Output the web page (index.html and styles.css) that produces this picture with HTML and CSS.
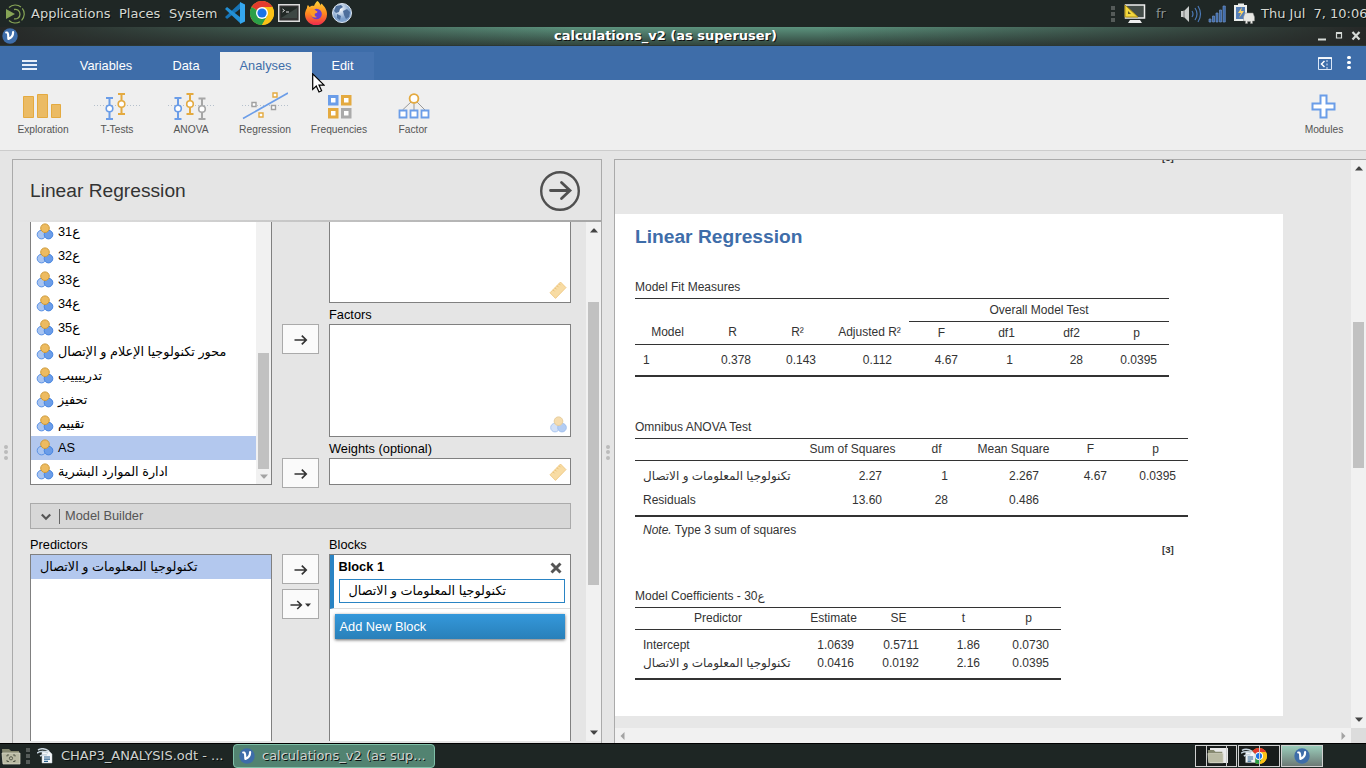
FILE: index.html
```html
<!DOCTYPE html>
<html lang="en">
<head>
<meta charset="utf-8">
<title>calculations_v2 (as superuser)</title>
<link rel="stylesheet" href="styles.css">
</head>
<body>
<svg class="defs" aria-hidden="true">
  <defs>
    <linearGradient id="fox" x1="0" y1="0" x2="0" y2="1"><stop offset="0" stop-color="#ffd43a"/><stop offset=".5" stop-color="#ff8a1e"/><stop offset="1" stop-color="#f0284f"/></linearGradient>
    <radialGradient id="globe" cx=".4" cy=".3"><stop offset="0" stop-color="#fff"/><stop offset="1" stop-color="#7fa2cd"/></radialGradient>
    <symbol id="nominal" viewBox="0 0 17 17">
      <circle cx="5" cy="11.6" r="4.3" fill="#a9c5f1" stroke="#5b92e5"/>
      <circle cx="12" cy="11.6" r="4.3" fill="#6b9de8" stroke="#4684e0"/>
      <circle cx="8.5" cy="5.2" r="4.3" fill="#edbb60" stroke="#cf9a38"/>
    </symbol>
    <symbol id="ruler" viewBox="0 0 18 18">
      <path d="M11.5 1 17 6.6 6.5 17.4 1 11.8z" fill="#f8dca4" stroke="#edc47a" stroke-width=".8"/>
      <path d="M4 8.8l1.5 1.5M6 6.8l1.5 1.5M8 4.7l1.5 1.5M10 2.7l1.5 1.5" stroke="#e4b96c" stroke-width=".8"/>
    </symbol>
    <symbol id="arrow" viewBox="0 0 14 12"><path d="M0.5 6H12M7.8 1.7 12.2 6 7.8 10.3" fill="none" stroke="#333" stroke-width="1.7"/></symbol>
    <symbol id="jamovi" viewBox="0 0 16 16"><circle cx="8" cy="8" r="7.7" fill="#3e6da9"/><path d="M4.200 4.500h.9c1.300 0 1 2.600 1.300 6.500 2.800-1 4.700-3 4.700-6.800" fill="none" stroke="#fff" stroke-width="2.2" stroke-linecap="round" stroke-linejoin="round"/></symbol>
    <symbol id="chrome" viewBox="0 0 24 24"><circle cx="12" cy="12" r="12" fill="#fbc116"/><path d="M12 12 1.6 6A12 12 0 0 1 22.4 6z" fill="#e33b2e"/><path d="M1.6 6A12 12 0 0 0 12 24L17.2 15 12 12z" fill="#2b9f48"/><path d="M12 6h10.4A12 12 0 0 1 12 24l5.2-9z" fill="#fbc116"/><circle cx="12" cy="12" r="6" fill="#fff"/><circle cx="12" cy="12" r="4.6" fill="#1a73e8"/></symbol>
    <symbol id="writer" viewBox="0 0 16 16"><path d="M5 3h7l3 3v9H5z" fill="#f5f7f9" stroke="#b8c4ca" stroke-width=".5"/><path d="M1 2q5-3 11 1M0 5q5-3 11 0M3 8q4-2 7-1" stroke="#c8d5de" fill="none" stroke-width="1.5"/><path d="M7 9h6M7 11.2h6M7 13.4h4" stroke="#2a618e" stroke-width="1.2"/></symbol>
    <symbol id="folder" viewBox="0 0 20 18"><path d="M1 2h7l2 2h8v12H2z" fill="#85886f"/><path d="M1 6h18v11H2z" fill="#b9baa3" stroke="#dddccb" stroke-width=".7"/></symbol>
    <symbol id="up" viewBox="0 0 8 5"><path d="M0 4.5 3.5.5h1L8 4.5z" fill="currentColor"/></symbol>
    <symbol id="down" viewBox="0 0 8 5"><path d="M0 .5 3.5 4.5h1L8 .5z" fill="currentColor"/></symbol>
  </defs>
</svg>

<div class="desktop">
  <header class="panel">
    <svg class="mate" viewBox="0 0 20 20" width="20" height="20"><g fill="none" stroke="#87a556"><path d="M4 3.5A9 9 0 1 1 4 16.500" stroke-dasharray="13 2" stroke-width="1.2"/><path d="M9 5.500a4.800 4.800 0 1 1 0 9.300" stroke-width="1.300"/></g><path d="M1 5l9 5-9 5z" fill="#87a556"/></svg>
    <span class="menu m1">Applications</span><span class="menu m2">Places</span><span class="menu m3">System</span>
    <div class="launchers">
      <svg viewBox="0 0 22 22" width="22" height="22"><path d="M16 1v6L3 17 1 15z" fill="#1673b5"/><path d="M16 21v-6L3 5 1 7z" fill="#2390d6"/><path d="M16 0l5 2.500v17L16 22z" fill="#35a7ef"/></svg>
      <svg width="24" height="24"><use href="#chrome"/></svg>
      <svg viewBox="0 0 22 18" width="22" height="18"><path d="M.7.7h20.600v16.600H.7z" fill="#333" stroke="#ddd" stroke-width="1.400"/><path d="M3 3h16v11H3z" fill="#222926"/><path d="M3 14 19 4v10z" fill="#3d4744"/><path d="M4.500 5l2 1.500-2 1.500M8 8h3" stroke="#e4e4e4" fill="none"/></svg>
      <svg viewBox="0 0 24 24" width="24" height="24"><path d="M13.500 0c1.800 1.500 2.500 3 3.300 4.400 0-.8.300-1.400.7-1.900 2.700 2.700 5.500 6 5.500 10.500A11 11 0 1 1 3 7c0-1.500.4-2.300 1-3l1.500 2C7.500 4.500 9 4.700 10 5c1-2.500 2-4 3.500-5z" fill="url(#fox)"/><circle cx="12.500" cy="13" r="5.300" fill="#6b3fd0"/><path d="M6 8c3-1 5 0 6 2 2 0 2 2-1 2.500-1 2 0 3 2 3.500-4 2-8-2-7-8z" fill="#ff9b24"/></svg>
      <svg viewBox="0 0 20 20" width="20" height="20"><circle cx="10" cy="10" r="9.500" fill="url(#globe)" stroke="#dde7f3"/><path d="M4 3l5-1 2 2-3 2-1 3-3 1-2-2zM11 8l4-2 3 3-1 5-3 2-2-4zM5 11l4 2-1 4-3-2z" fill="#4e6f9c"/></svg>
    </div>
    <div class="tray">
      <i class="grip"><b></b><b></b><b></b></i>
      <svg class="t1" viewBox="0 0 22 20" width="22" height="20"><path d="M1.500 1h19v13h-19z" fill="#444d49" stroke="#eee" stroke-width="1.500"/><path d="M6 16h10l2 3H4z" fill="#eee"/><path d="M1 1l13 12H1z" fill="#f4d83d" stroke="#ad8d12"/><path d="M4 7l3 3H4z" fill="#615923"/></svg>
      <span class="lang">fr</span>
      <svg class="t2" viewBox="0 0 22 20" width="22" height="20"><path d="M1 7h3l5-5v16l-5-5H1z" fill="#c9cccb"/><path d="M4 6v8" stroke="#777"/><path d="M12 7q2 3 0 6M15 4q4 6 0 12M18 2q5 8 0 16" stroke="#4b79b6" fill="none" stroke-width="1.200"/></svg>
      <svg class="t3" viewBox="0 0 18 18" width="18" height="18"><path d="M1 14h2v3H1zM4.500 11h2v6h-2zM8 8h2v9H8zM11.500 5h2v12h-2zM15 1h2.300v16H15z" fill="#3b67a8" stroke="#6f94c9" stroke-width=".7"/></svg>
      <svg class="t4" viewBox="0 0 22 21" width="22" height="21"><path d="M1 2h4V.5h6V2h3v16H1z" fill="#ecefec"/><path d="M3 4h9v12H3z" fill="#557fb8"/><path d="M9 4 5 10h3l-2 5 5-7H8z" fill="#ffd45e"/><path d="M12 10h8l1.500 4v4h-2v2.500h-2V18.500h-3v2h-2V18h-2v-4z" fill="#e8e8e4" stroke="#888" stroke-width=".5"/></svg>
      <span class="clock">Thu Jul&nbsp; 7, 10:06</span>
    </div>
  </header>

  <div class="titlebar">
    <svg class="app" width="16" height="16"><use href="#jamovi"/></svg>
    <span class="title">calculations_v2 (as superuser)</span>
    <svg class="winbtns" viewBox="0 0 44 12" width="44" height="12"><path d="M1 9.500h8" stroke="#d6dad7" stroke-width="2"/><path d="M19.500 3h5v5h-5z" fill="none" stroke="#d6dad7" stroke-width="1.200"/><path d="M19 3h6" stroke="#d6dad7" stroke-width="2"/><path d="M35.500 2l7 7.500M42.500 2l-7 7.500" stroke="#d6dad7" stroke-width="2.200"/></svg>
  </div>

  <nav class="tabs">
    <div class="burger"><i></i><i></i><i></i></div>
    <div class="tab variables">Variables</div><div class="tab data">Data</div><div class="tab analyses">Analyses</div><div class="tab edit">Edit</div>
    <svg class="hide" viewBox="0 0 14 13" width="14" height="13"><path d="M.5.5h13v12H.5z" fill="none" stroke="#d9e6f7"/><path d="M0 1.200h14" stroke="#fff" stroke-width="1.500"/><path d="M6.500 4 3.500 7l3 3" stroke="#fff" fill="none" stroke-width="1.500"/><path d="M9 3v9" stroke="#d9e6f7" stroke-dasharray="2 1.500"/></svg>
    <div class="kebab"><i></i><i></i><i></i></div>
  </nav>

  <div class="ribbon">
    <div class="tool"><svg viewBox="0 0 46 32" width="46" height="32"><g fill="#ebbb64" stroke="#e4aa40"><path d="M3.500 6.500h10v21h-10zM17.500 4.500h10v23h-10zM31.500 14.500h9v13h-9z"/></g></svg><span>Exploration</span></div>
    <div class="tool"><svg viewBox="0 0 46 32" width="46" height="32"><path d="M0 15.500h46" stroke="#b5c0cc" stroke-dasharray="1 2"/><g fill="none" stroke-width="2"><path d="M12 8h7M12 29h7M15.500 8v21" stroke="#6b9de8"/><path d="M24 4h7M24 24h7M27.500 4v20" stroke="#e4aa40"/></g><circle cx="15.500" cy="18.500" r="3.300" fill="#fff" stroke="#6b9de8" stroke-width="1.600"/><circle cx="27.500" cy="14" r="3.300" fill="#fff" stroke="#e4aa40" stroke-width="1.600"/></svg><span>T-Tests</span></div>
    <div class="tool"><svg viewBox="0 0 46 32" width="46" height="32"><path d="M0 15.500h46" stroke="#b5c0cc" stroke-dasharray="1 2"/><g fill="none" stroke-width="2"><path d="M6.500 8h7M6.500 29h7M10 8v21" stroke="#6b9de8"/><path d="M18.500 4h7M18.500 24h7M22 4v20" stroke="#e4aa40"/><path d="M30.500 8.500h7M30.500 29h7M34 8v21" stroke="#a6a6a6"/></g><circle cx="10" cy="18.500" r="3.300" fill="#fff" stroke="#6b9de8" stroke-width="1.600"/><circle cx="22" cy="14" r="3.300" fill="#fff" stroke="#e4aa40" stroke-width="1.600"/><circle cx="34" cy="19" r="3.300" fill="#fff" stroke="#a6a6a6" stroke-width="1.600"/></svg><span>ANOVA</span></div>
    <div class="tool"><svg viewBox="0 0 46 32" width="46" height="32"><path d="M0 15.500h46" stroke="#b5c0cc" stroke-dasharray="1 2"/><path d="M1 28.500 46 3" stroke="#6b9de8" stroke-width="1.600"/><g fill="#fff" stroke-width="1.400"><path d="M31 3h4v4h-4zM17 23h4v4h-4z" stroke="#e4aa40"/><path d="M10 12.500h4v4h-4zM29.500 15.500h4v4h-4z" stroke="#a0a0a0"/></g></svg><span>Regression</span></div>
    <div class="tool"><svg class="nudge" viewBox="0 0 46 32" width="46" height="32"><g fill="#fff" stroke-width="3"><path d="M12.500 6.500h7.500v7.500h-7.500z" stroke="#6b9de8"/><path d="M25.500 6.500H33v7.500h-7.500zM12.500 19.500h7.500V27h-7.500z" stroke="#e4aa40"/><path d="M25.500 19.500H33V27h-7.500z" stroke="#aaa"/></g></svg><span>Frequencies</span></div>
    <div class="tool"><svg class="nudge" viewBox="0 0 46 32" width="46" height="32"><path d="M20 12 11.500 20M23 13v7M26 12l8 8" stroke="#999" fill="none"/><circle cx="23" cy="8.500" r="4.400" fill="#fff" stroke="#e4aa40" stroke-width="1.800"/><path d="M8.500 20.500h7v7h-7zM19.500 20.500h7v7h-7zM30.500 20.500h7v7h-7z" fill="#fff" stroke="#6b9de8" stroke-width="1.800"/></svg><span>Factor</span></div>
    <div class="tool modules"><svg viewBox="0 0 46 32" width="46" height="32"><path d="M19.500 5.500h6v8h8v6h-8v8h-6v-8h-8v-6h8z" fill="#fff" stroke="#6b9de8" stroke-width="2"/></svg><span>Modules</span></div>
  </div>

  <main class="work">
    <div class="gutter"><b></b><b></b><b></b></div>
    <section class="options">
      <div class="ophead"><h2>Linear Regression</h2>
        <svg viewBox="0 0 40 40" width="40" height="40"><circle cx="20" cy="20" r="18.800" fill="none" stroke="#505050" stroke-width="2.400"/><path d="M10.500 19.500H29M21.500 11.500l8.500 8-8.500 8" fill="none" stroke="#505050" stroke-width="2.800" stroke-linecap="round" stroke-linejoin="miter"/></svg>
      </div>
      <div class="opbody">
        <div class="opcontent">
          <div class="upper">
            <div class="varlist">
              <div class="vars">
                <div class="var"><svg><use href="#nominal"/></svg>ع31</div>
                <div class="var"><svg><use href="#nominal"/></svg>ع32</div>
                <div class="var"><svg><use href="#nominal"/></svg>ع33</div>
                <div class="var"><svg><use href="#nominal"/></svg>ع34</div>
                <div class="var"><svg><use href="#nominal"/></svg>ع35</div>
                <div class="var"><svg><use href="#nominal"/></svg>محور تكنولوجيا الإعلام و الإتصال</div>
                <div class="var"><svg><use href="#nominal"/></svg>تدرييييب</div>
                <div class="var"><svg><use href="#nominal"/></svg>تحفيز</div>
                <div class="var"><svg><use href="#nominal"/></svg>تقييم</div>
                <div class="var sel"><svg><use href="#nominal"/></svg>AS</div>
                <div class="var"><svg><use href="#nominal"/></svg>ادارة الموارد البشرية</div>
              </div>
              <div class="vscroll inner"><div class="thumb"></div><svg class="tri"><use href="#down"/></svg></div>
            </div>
            <div class="btncol">
              <div class="btn b1"><svg width="14" height="12"><use href="#arrow"/></svg></div>
              <div class="btn b2"><svg width="14" height="12"><use href="#arrow"/></svg></div>
            </div>
            <div class="targets">
              <div class="box cov"><svg width="18" height="18"><use href="#ruler"/></svg></div>
              <div class="label">Factors</div>
              <div class="box fac"><svg class="faint" width="17" height="17"><use href="#nominal"/></svg></div>
              <div class="label">Weights (optional)</div>
              <div class="box wts"><svg width="18" height="18"><use href="#ruler"/></svg></div>
            </div>
          </div>
          <div class="collapse"><svg viewBox="0 0 10 8" width="10" height="8"><path d="M.8 1.500 5 5.800 9.200 1.500" fill="none" stroke="#555" stroke-width="2.200"/></svg><i></i><span>Model Builder</span></div>
          <div class="lower">
            <div class="col"><div class="label">Predictors</div><div class="supplier"><div class="pred">تكنولوجيا المعلومات و الاتصال</div></div></div>
            <div class="btncol low">
              <div class="btn"><svg width="14" height="12"><use href="#arrow"/></svg></div>
              <div class="btn drop"><svg width="13" height="12"><use href="#arrow"/></svg><svg class="caret" width="6" height="4"><use href="#down"/></svg></div>
            </div>
            <div class="col"><div class="label">Blocks</div>
              <div class="blocks">
                <div class="block"><div class="bhead"><span>Block 1</span><svg viewBox="0 0 12 12" width="12" height="12"><path d="M1.500 1.500l9 9M10.500 1.500l-9 9" stroke="#555" stroke-width="2.900"/></svg></div><div class="term">تكنولوجيا المعلومات و الاتصال</div></div>
                <div class="add">Add New Block</div>
              </div>
            </div>
          </div>
        </div>
        <div class="vscroll outer"><svg class="tri"><use href="#up"/></svg><div class="thumb"></div><svg class="tri"><use href="#down"/></svg></div>
      </div>
    </section>
    <div class="gutter mid"><b></b><b></b><b></b></div>
    <section class="results">
      <div class="view">
        <div class="prev"><span class="ref">[3]</span></div>
        <article class="page">
          <h1>Linear Regression</h1>
          <div class="cap">Model Fit Measures</div>
          <table class="fit">
            <colgroup><col class="c65"><col class="c65"><col class="c65"><col class="c79"><col class="c65"><col class="c65"><col class="c65"><col class="c65"></colgroup>
            <thead><tr class="over"><th colspan="4"></th><th colspan="4" class="span">Overall Model Test</th></tr>
            <tr class="names"><th>Model</th><th>R</th><th>R²</th><th>Adjusted R²</th><th class="sub">F</th><th class="sub">df1</th><th class="sub">df2</th><th class="sub">p</th></tr></thead>
            <tbody><tr><td class="txt">1</td><td class="p14">0.378</td><td class="p14">0.143</td><td class="p17">0.112</td><td class="p16">4.67</td><td class="p26">1</td><td class="p21">28</td><td class="p12">0.0395</td></tr></tbody>
          </table>
          <div class="cap c2">Omnibus ANOVA Test</div>
          <table class="anova">
            <colgroup><col class="c166"><col class="c103"><col class="c65"><col class="c89"><col class="c65"><col class="c65"></colgroup>
            <thead><tr><th></th><th>Sum of Squares</th><th>df</th><th>Mean Square</th><th>F</th><th>p</th></tr></thead>
            <tbody><tr><td class="txt">تكنولوجيا المعلومات و الاتصال</td><td class="p22">2.27</td><td class="p21">1</td><td class="p19">2.267</td><td class="p16">4.67</td><td class="p12">0.0395</td></tr>
            <tr><td class="txt">Residuals</td><td class="p22">13.60</td><td class="p21">28</td><td class="p19">0.486</td><td></td><td></td></tr></tbody>
          </table>
          <div class="note"><em>Note.</em> Type 3 sum of squares</div>
          <div class="refline"><span class="ref">[3]</span></div>
          <div class="cap c3">Model Coefficients - ع30</div>
          <table class="coef">
            <colgroup><col class="c166"><col class="c65"><col class="c65"><col class="c65"><col class="c65"></colgroup>
            <thead><tr><th>Predictor</th><th>Estimate</th><th>SE</th><th>t</th><th>p</th></tr></thead>
            <tbody><tr><td class="txt">Intercept</td><td class="p12">1.0639</td><td class="p12">0.5711</td><td class="p16">1.86</td><td class="p12">0.0730</td></tr>
            <tr><td class="txt">تكنولوجيا المعلومات و الاتصال</td><td class="p12">0.0416</td><td class="p12">0.0192</td><td class="p16">2.16</td><td class="p12">0.0395</td></tr></tbody>
          </table>
        </article>
      </div>
      <div class="vscroll right"><svg class="tri"><use href="#up"/></svg><div class="thumb"></div><svg class="tri"><use href="#down"/></svg></div>
      <div class="hscroll"><svg viewBox="0 0 5 8" width="5" height="8"><path d="M4.500 0v8L.5 4z" fill="#a3a3a3"/></svg><svg viewBox="0 0 5 8" width="5" height="8"><path d="M.5 0v8l4-4z" fill="#a3a3a3"/></svg></div>
      <div class="corner"></div>
    </section>
  </main>

  <footer class="taskbar">
    <svg class="home" viewBox="0 0 20 18" width="20" height="18"><use href="#folder"/><path d="M6 9.500V8h2M12 8h2v1.500M14 13v1.500h-2M8 14.500H6V13" stroke="#555a4b" fill="none"/><circle cx="10" cy="11.300" r="1.600" fill="none" stroke="#555a4b"/></svg>
    <i class="grip"><b></b><b></b><b></b></i>
    <div class="task"><svg width="16" height="16"><use href="#writer"/></svg><span>CHAP3_ANALYSIS.odt - ...</span></div>
    <div class="task active"><svg width="16" height="16"><use href="#jamovi"/></svg><span>calculations_v2 (as sup...</span></div>
    <div class="pager">
      <div class="ws"><svg viewBox="0 0 40 20" width="40" height="20"><path d="M14 2h18v15H14z" fill="#e9eaea"/><use href="#folder" x="11" y="2" width="17" height="16"/><path d="M10.500 0v20M30.500 0v20" stroke="#ccc"/></svg></div>
      <div class="ws"><svg viewBox="0 0 40 20" width="40" height="20"><use href="#chrome" x="12" y="2" width="16" height="16"/><use href="#writer" x="2" y="2" width="15" height="16"/><path d="M20.500 0v20" stroke="#ccc"/></svg></div>
      <div class="ws on"><svg width="16" height="16"><use href="#jamovi"/></svg></div>
    </div>
  </footer>
  <svg class="pointer" viewBox="0 0 13 20" width="13" height="20"><path d="M.7.9v15.500l3.600-3.400 2.700 6 2.600-1.200-2.600-5.700h5z" fill="#fff" stroke="#000" stroke-width="1.200"/></svg>
</div>
</body>
</html>
```
FILE: styles.css
```css
* { box-sizing: border-box; }
body { margin: 0; font-family: "Liberation Sans", "DejaVu Sans", sans-serif; font-size: 12.8px; color: #000; }
svg { display: block; flex: none; }
.defs { position: absolute; width: 0; height: 0; }
.desktop { position: relative; width: 1366px; height: 768px; overflow: hidden; display: flex; flex-direction: column; background: #e5e5e5; }

/* desktop panel */
.panel { height: 27px; flex: none; display: flex; align-items: center; background: #1f2725; color: #d5d8d3; font: 13px/26px "DejaVu Sans", sans-serif; white-space: nowrap; text-shadow: 1px 1px 0 #0b0f0e; }
.mate { margin-left: 5px; }
.m1 { margin-left: 6px; width: 88px; }
.m2 { width: 50px; }
.m3 { width: 55px; }
.launchers { display: flex; align-items: center; gap: 4px; padding-bottom: 2px; }
.tray { margin-left: auto; display: flex; align-items: center; }
.grip { display: flex; flex-direction: column; gap: 2px; }
.grip b { width: 4px; height: 4px; background: #555b59; }
.t1 { margin-left: 9px; }
.lang { margin-left: 10px; color: #8b9290; width: 11px; }
.t2 { margin-left: 13px; }
.t3 { margin-left: 6px; }
.t4 { margin-left: 7px; }
.clock { margin-left: 6px; width: 105px; }

.titlebar { height: 19px; flex: none; display: flex; align-items: center; background: linear-gradient(90deg, #262827 0, #26282700 42%, #26282700 60%, #262827 100%), linear-gradient(#5c937e, #32463e); color: #fff; border-bottom: 1px solid #2b3733; }
.app { margin-left: 2px; }
.title { flex: 1; text-align: center; font: bold 13px/18px "DejaVu Sans", sans-serif; padding-right: 4px; text-shadow: 1px 1px 0 #111; }
.winbtns { margin-right: 5px; }

.tabs { height: 34px; flex: none; display: flex; align-items: flex-end; background: #3e6da9; color: #fff; }
.burger { width: 15px; margin: 0 0 10px 22px; display: flex; flex-direction: column; gap: 2px; }
.burger i { height: 2px; background: #e8effa; }
.tab { height: 28px; line-height: 28px; text-align: center; }
.variables { margin-left: 23px; width: 92px; }
.data { width: 68px; }
.analyses { width: 92px; background: #efefef; color: #3e6da9; padding-right: 1px; }
.edit { width: 62px; background: #4673af; padding-right: 1px; }
.hide { margin: 0 0 10px auto; }
.kebab { margin: 0 15px 11px 15px; display: flex; flex-direction: column; gap: 1.500px; }
.kebab i { width: 4px; height: 3.500px; border-radius: 2px; background: #fff; }

.ribbon { height: 71px; flex: none; display: flex; background: #efefef; border-bottom: 1px solid #ccc; padding: 10px 5px 0 6px; }
.tool { width: 74px; display: flex; flex-direction: column; align-items: center; font-size: 10.240px; line-height: 16px; color: #555; }
.nudge { margin: 0 -1px 0 0; }
.modules { margin-left: auto; }

.work { height: 592px; flex: none; display: flex; padding-top: 8px; }
.gutter { width: 12px; flex: none; display: flex; flex-direction: column; align-items: center; justify-content: center; gap: 1.500px; padding-top: 2px; }
.gutter b { width: 4px; height: 4px; border-radius: 2px; background: #bbb; }

.options { width: 590px; flex: none; border: 1px solid #aaa; border-bottom: 0; display: flex; flex-direction: column; }
.ophead { height: 60px; flex: none; display: flex; align-items: center; justify-content: space-between; padding: 1px 21px 0 17px; }
.ophead h2 { margin: 0; font-weight: 400; font-size: 19.200px; color: #333; }
.opbody { height: 521px; overflow: hidden; display: flex; border-top: 2px solid; border-image: linear-gradient(90deg, #e5e5e5, #a5a5a5) 1; }
.opcontent { width: 573px; padding-left: 17px; height: 519px; overflow: hidden; }
.upper { display: flex; height: 263px; }
.varlist { width: 242px; height: 263px; border: 1px solid #808080; border-top: 0; background: #fff; display: flex; overflow: hidden; }
.vars { width: 225px; margin-top: -2px; }
.var { height: 24px; line-height: 24px; display: flex; align-items: center; gap: 4px; padding-left: 5px; white-space: nowrap; }
.var svg { width: 18px; height: 17px; margin-bottom: 1px; }
.sel, .pred { background: #b3c8ee; }
.vscroll { width: 15px; flex: none; background: #f1f1f1; display: flex; flex-direction: column; align-items: center; color: #444; }
.vscroll .thumb { width: 11px; background: #c1c1c1; }
.tri { width: 8px; height: 5px; }
.inner .thumb { height: 116px; margin: 131px 0 5px; }
.inner .tri { color: #a3a3a3; }
.btncol { width: 57px; flex: none; padding: 0 10px; }
.btn { width: 37px; height: 30px; border: 1px solid #aaa; background: #fafafa; display: flex; align-items: center; justify-content: center; padding-top: 1px; }
.b1 { margin-top: 102px; }
.b2 { margin-top: 104px; }
.targets { width: 242px; }
.box { border: 1px solid #808080; background: #fff; display: flex; align-items: flex-end; justify-content: flex-end; padding: 3px; }
.box .faint { opacity: .5; }
.cov { height: 81px; border-top: 0; }
.fac { height: 113px; }
.wts { height: 27px; }
.targets .label { height: 21px; line-height: 24px; }
.collapse { width: 541px; height: 26px; margin-top: 18px; border: 1px solid #aaa; background: #d7d7d7; color: #555; display: flex; align-items: center; padding-left: 10px; }
.collapse span { margin-top: -1px; }
.collapse svg { margin-top: 2px; }
.collapse i { width: 1px; height: 15px; background: #666; margin: 0 5px 0 8px; }
.lower { display: flex; padding-top: 7px; }
.col { width: 242px; }
.lower .label { height: 18px; line-height: 18px; }
.supplier, .blocks { height: 200px; border: 1px solid #808080; background: #fff; }
.pred { height: 24px; line-height: 24px; padding-left: 9px; }
.low { padding-top: 18px; }
.drop { margin-top: 5px; gap: 2px; }
.caret { color: #333; }
.block { height: 54px; border-left: 4px solid #2a84c4; border-bottom: 1px solid #ddd; padding: 0 5px 0 4.500px; }
.bhead { height: 24px; line-height: 24px; display: flex; align-items: center; justify-content: space-between; font-weight: 700; padding-right: 3px; }
.bhead svg { margin-top: 2px; }
.term { height: 24px; line-height: 22px; border: 1px solid #2a84c4; padding-left: 9px; }
.add { height: 25px; line-height: 25px; margin: 5px; background: linear-gradient(#3498db, #2980b9); color: #fff; padding-left: 4.500px; box-shadow: 0 1px 3px #0009; }
.outer .tri:first-child { margin-top: 6px; }
.outer .thumb { height: 283px; margin: 69px 0 145px; }

.results { flex: 1; border-top: 1px solid #aaa; border-left: 1px solid #aaa; display: grid; grid-template: 568px 15px / 1fr 15px; background: #e7e7e7; color: #333; font-size: 12px; }
.view { overflow: hidden; }
.prev { height: 54px; padding-left: 547px; line-height: 12px; display: flex; align-items: flex-start; }
.ref { font-size: 9.600px; font-weight: 700; }
.prev .ref { margin-top: -8px; height: 12px; }
.page { width: 668px; height: 502px; background: #fff; padding: 11px 0 0 20px; }
.page h1 { margin: 0 0 30px; font-size: 19.200px; line-height: 24px; color: #3e6da9; }
.cap { height: 16px; line-height: 16px; margin-bottom: 3px; }
.c2 { margin-top: 42px; }
.c3 { margin-top: 31px; }
table { table-layout: fixed; border-collapse: separate; border-spacing: 0; border-top: 1px solid #333; border-bottom: 2px solid #333; white-space: nowrap; }
th, td { padding: 0; line-height: 14px; }
th { font-weight: 400; text-align: center; border-bottom: 1px solid #333; }
td { text-align: right; }
.fit { width: 534px; height: 79px; }
.anova { width: 553px; height: 79px; }
.coef { width: 426px; height: 73px; }
.c65 { width: 65px; } .c79 { width: 79px; } .c89 { width: 89px; } .c103 { width: 103px; } .c166 { width: 166px; }
.over th { height: 23px; border-bottom: 0; }
.over .span { border-bottom: 1px solid #333; }
.names th { height: 23px; padding-bottom: 2px; }
.names .sub { padding-bottom: 0; }
.fit td { height: 30px; }
.anova th, .coef th { height: 22px; padding-bottom: 2px; }
.anova tbody tr:first-child td { height: 30px; }
.anova tbody tr:last-child td { height: 24px; padding-bottom: 6px; }
.coef tbody td { height: 24px; }
.coef tbody tr:first-child td { padding-top: 6px; }
.coef tbody tr:last-child td { padding-bottom: 6px; }
td.txt { text-align: left; padding-left: 8px; }
td.p12 { padding-right: 12px; } td.p14 { padding-right: 14px; } td.p16 { padding-right: 16px; } td.p17 { padding-right: 17px; } td.p19 { padding-right: 19px; } td.p21 { padding-right: 21px; } td.p22 { padding-right: 22px; } td.p26 { padding-right: 26px; }
.note { height: 16px; line-height: 16px; margin-top: 5px; padding-left: 8px; }
.refline { height: 16px; line-height: 16px; margin-top: 3px; padding-left: 527px; }
.right .tri:first-child { margin-top: 6px; }
.right .thumb { height: 146px; margin: 151px 0 249px; }
.hscroll { background: #f1f1f1; display: flex; align-items: center; justify-content: space-between; padding: 0 5px; }
.corner { background: #dcdcdc; }

.taskbar { height: 25px; flex: none; border-top: 1px solid #000; background: #1e2624; display: flex; align-items: center; color: #d0d4d1; font: 13px/22px "DejaVu Sans", sans-serif; white-space: nowrap; text-shadow: 1px 1px 0 #0b0f0e; }
.home { margin-left: 1px; }
.taskbar .grip { margin-left: 5px; }
.task { display: flex; align-items: center; gap: 8px; margin-left: 7px; width: 195px; }
.task span { margin-top: -1px; }
.active { width: 202px; height: 24px; margin-left: 1px; padding-left: 5px; gap: 7px; background: #528371; border: 1px solid #7fc0a8; border-radius: 4px; }
.pager { margin: 0 43px 0 auto; display: flex; gap: 1px; }
.ws { width: 42px; height: 22px; border: 1px solid #d0d0d0; background: #181c1b; display: flex; align-items: center; justify-content: center; }
.on { background: linear-gradient(#9accba, #6d7975); }
.pointer { position: absolute; left: 312px; top: 73px; }
```
